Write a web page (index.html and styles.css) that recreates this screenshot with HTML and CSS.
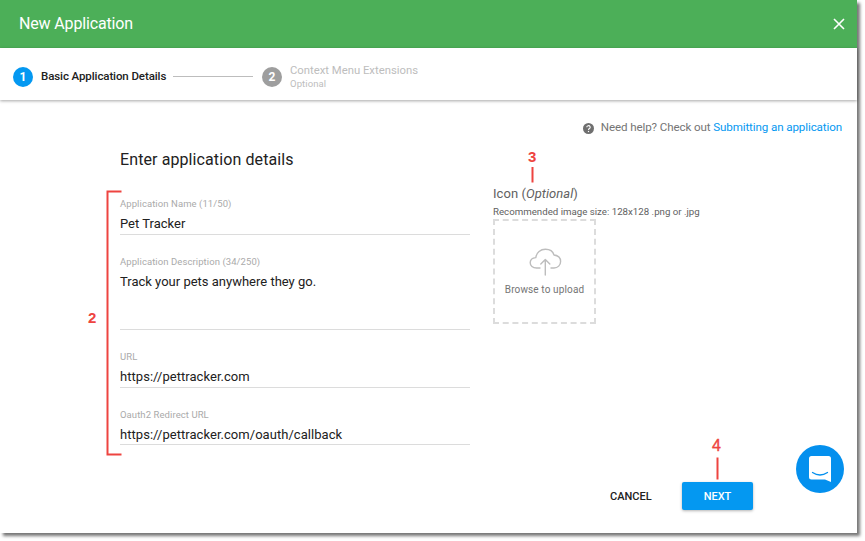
FILE: index.html
```
<!DOCTYPE html>
<html lang="en">
<head>
<meta charset="utf-8">
<title>New Application</title>
<link rel="stylesheet" href="styles.css">
</head>
<body>
<div class="dialog">
  <header class="titlebar">
    <h1 class="title">New Application</h1>
    <svg class="close" width="12" height="12" viewBox="0 0 12 12"><path d="M1 1l10 10M11 1L1 11"/></svg>
  </header>
  <nav class="stepper">
    <span class="step-dot active">1</span>
    <span class="step-name">Basic Application Details</span>
    <span class="step-line"></span>
    <span class="step-dot">2</span>
    <div class="step-text">
      <span class="step-next">Context Menu Extensions</span>
      <span class="step-optional">Optional</span>
    </div>
  </nav>
  <div class="help">
    <svg width="11" height="11" viewBox="0 0 11 11"><circle cx="5.5" cy="5.5" r="5.5" fill="#6f6f6f"/><path d="M3.8 4.3a1.7 1.6 0 1 1 2.6 1.3Q5.5 6.1 5.5 7" fill="none" stroke="#fff" stroke-width="1.1"/><path d="M4.9 7.9h1.2v1.2H4.9z" fill="#fff"/></svg>
    <span class="help-text">Need help? Check out <a class="link">Submitting an application</a></span>
  </div>
  <main class="content">
    <section class="form">
      <h2 class="heading">Enter application details</h2>
      <div class="field"><label class="label">Application Name (11/50)</label><div class="value">Pet Tracker</div></div>
      <div class="field tall"><label class="label">Application Description (34/250)</label><div class="value">Track your pets anywhere they go.</div></div>
      <div class="field"><label class="label">URL</label><div class="value url">https://pettracker.com</div></div>
      <div class="field last"><label class="label">Oauth2 Redirect URL</label><div class="value url">https://pettracker.com/oauth/callback</div></div>
    </section>
    <section class="icon-panel">
      <div class="icon-title">Icon (<i>Optional</i>)</div>
      <div class="icon-hint">Recommended image size: 128x128 .png or .jpg</div>
      <div class="upload">
        <svg class="cloud" width="33" height="28" viewBox="0 0 33 28"><path d="M11 20H7.500C3.700 20 1.200 17.700 1.200 14.800C1.200 11.900 3.400 9.800 6.800 9.600C7.500 4.500 11.500 1.200 16.500 1.200C20.800 1.200 24 3.500 25 7C29 7.500 31.600 9.800 31.600 13.400C31.600 17.200 28.800 20 25 20H22M16.300 27V11.500M11.800 16L16.300 11.500L20.800 16"/></svg>
        <span class="upload-text">Browse to upload</span>
      </div>
    </section>
  </main>
  <footer class="actions">
    <span class="cancel">CANCEL</span>
    <span class="next">NEXT</span>
  </footer>
  <div class="chat">
    <svg width="22" height="26" viewBox="0 0 22 26"><path d="M2.500 0H19.500Q22 0 22 2.500V26L16 23.400H2.500Q0 23.400 0 20.900V2.500Q0 0 2.500 0Z" fill="#fff"/><path d="M3.500 16.500Q11 21.500 18.500 16.500" fill="none" stroke="#0490ee" stroke-width="1.300" stroke-linecap="round"/></svg>
  </div>
  <svg class="callouts" width="857" height="533" viewBox="0 0 857 533"><path d="M121.500 191.500H107.500V454.500H121.500M532.500 167V182.500M717.500 457.500V479.500"/></svg>
  <span class="mark mark-2">2</span>
  <span class="mark mark-3">3</span>
  <span class="mark mark-4">4</span>
</div>
</body>
</html>
```
FILE: styles.css
```
* { box-sizing: border-box; }
body { margin: 0; height: 541px; background: #fff; font-family: Roboto, sans-serif; color: #212121; overflow: hidden; }
.dialog { position: relative; width: 857px; height: 533px; background: #fff; box-shadow: 3px 3px 3px #777; display: flex; flex-direction: column; }
.titlebar { height: 48px; background: #4caf58; display: flex; align-items: center; justify-content: space-between; padding: 0 12px 0 19px; flex: none; }
.title { margin: 0; font-size: 16px; font-weight: 400; color: #fff; line-height: 20px; letter-spacing: -.15px; }
.close { stroke: #fff; stroke-width: 1.6; fill: none; }
.stepper { height: 52px; flex: none; display: flex; align-items: center; padding: 5px 0 0 13px; box-shadow: 0 1px 3px rgba(0,0,0,.35); white-space: nowrap; }
.step-dot { width: 20px; height: 20px; border-radius: 50%; background: #9e9e9e; color: #fff; font-size: 12px; font-weight: 700; line-height: 20px; text-align: center; }
.step-dot.active { background: #0498f1; }
.step-name { font-size: 11.5px; font-weight: 500; letter-spacing: -.1px; width: 125px; margin-left: 8px; padding-bottom: 2px; }
.step-line { width: 80px; height: 1px; background: #bdbdbd; margin: 0 9px 0 7px; }
.step-text { margin-left: 8px; padding-top: 1px; display: flex; flex-direction: column; color: #bdbdbd; }
.step-next { font-size: 11.3px; line-height: 14px; }
.step-optional { font-size: 9.5px; line-height: 11px; padding-bottom: 2px; letter-spacing: .1px; }
.help { display: flex; align-items: center; justify-content: flex-end; gap: 7px; height: 20px; margin: 17px 15px 0 0; font-size: 11.6px; letter-spacing: -.11px; color: #757575; }
.help svg { margin-top: 3px; }
.link { color: #0498f1; }
.content { display: flex; padding-left: 120px; height: 330px; flex: none; }
.form { width: 350px; padding-top: 13px; }
.heading { margin: 0; font-size: 16px; font-weight: 400; line-height: 20px; letter-spacing: .1px; }
.field { height: 58px; border-bottom: 1px solid #dcdcdc; display: flex; flex-direction: column; padding-top: 20px; }
.heading + .field { margin-top: 7px; }
.field.tall { height: 95px; }
.field.last { height: 57px; }
.label { font-size: 9.5px; line-height: 14px; color: #aaa; letter-spacing: .08px; }
.value { font-size: 13px; line-height: 18px; margin-top: 4px; }
.url { letter-spacing: .04px; }
.icon-panel { margin-left: 23px; padding-top: 48px; color: #616161; }
.icon-title { font-size: 13px; line-height: 18px; letter-spacing: .05px; }
.icon-hint { font-size: 9.7px; line-height: 12px; margin-top: 3px; }
.upload { width: 103px; height: 105px; margin-top: 1px; padding-top: 27px; border: 2px dashed #dcdcdc; display: flex; flex-direction: column; align-items: center; }
.cloud { stroke: #bdbdbd; stroke-width: 1.4; fill: none; stroke-linecap: round; stroke-linejoin: round; margin-left: 2px; }
.upload-text { font-size: 10px; line-height: 14px; margin-top: 7px; letter-spacing: .13px; color: #757575; white-space: nowrap; }
.actions { display: flex; align-items: center; padding-left: 610px; margin-top: 15px; height: 28px; font-size: 11px; font-weight: 500; }
.cancel { width: 72px; }
.next { width: 71px; height: 28px; line-height: 29px; background: #0498f1; color: #fff; text-align: center; border-radius: 2px; box-shadow: 0 1px 3px rgba(0,0,0,.3); }
.chat { position: absolute; left: 796px; top: 445px; width: 48px; height: 48px; border-radius: 50%; background: #0490ee; display: flex; align-items: center; justify-content: center; }
.callouts { position: absolute; left: 0; top: 0; fill: none; stroke: #ee4440; stroke-width: 2; pointer-events: none; }
.mark { position: absolute; font-family: "Liberation Sans", sans-serif; font-size: 15px; line-height: 16px; font-weight: 700; color: #ee4440; }
.mark-2 { left: 88px; top: 310px; }
.mark-3 { left: 528px; top: 149px; }
.mark-4 { left: 712px; top: 438px; font-size: 16px; font-weight: 400; -webkit-text-stroke: .4px #ee4440; }
```
